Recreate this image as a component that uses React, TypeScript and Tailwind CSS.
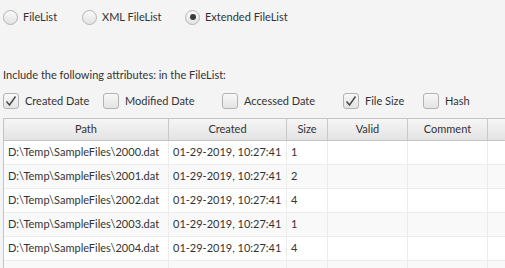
const rows = [
  { path: "D:\\Temp\\SampleFiles\\2000.dat", size: "1" },
  { path: "D:\\Temp\\SampleFiles\\2001.dat", size: "2" },
  { path: "D:\\Temp\\SampleFiles\\2002.dat", size: "4" },
  { path: "D:\\Temp\\SampleFiles\\2003.dat", size: "1" },
  { path: "D:\\Temp\\SampleFiles\\2004.dat", size: "4" },
  { path: "", size: "" },
];

const Radio = ({ label, checked, width }: { label: string; checked?: boolean; width: string }) => (
  <div className={`flex flex-none items-center gap-[5px] ${width}`}>
    <span className="flex h-[15px] w-[15px] items-center justify-center rounded-full border border-[#b3b3b3] bg-gradient-to-b from-[#fafafa] to-[#e2e2e2]">
      {checked && <span className="h-[6px] w-[6px] rounded-full bg-[#3a3a3a]" />}
    </span>
    <span>{label}</span>
  </div>
);

const CheckBox = ({ label, checked, width }: { label: string; checked?: boolean; width: string }) => (
  <div className={`flex flex-none items-center gap-[6px] ${width}`}>
    <span className="flex h-[16px] w-[16px] items-center justify-center rounded-[3px] border border-[#b3b3b3] bg-gradient-to-b from-[#f8f8f8] to-[#e4e4e4]">
      {checked && (
        <svg width="12" height="12" viewBox="0 0 12 12" fill="none">
          <path d="M1.5 6.5 L4.5 10 L10.5 1.5" stroke="#4a4a4a" strokeWidth="1.5" />
        </svg>
      )}
    </span>
    <span>{label}</span>
  </div>
);

const cols = "grid grid-cols-[165px_118px_41px_80px_80px_1fr]";

export default function App() {
  return (
    <div className="h-[268px] w-[505px] overflow-hidden whitespace-nowrap bg-[#f4f4f4] pl-[3px] text-[11px] text-[#333333] [font-family:Lato,sans-serif]">
      {/* Output format */}
      <div className="flex h-[33px] items-center pt-[1px]">
        <Radio label="FileList" width="w-[79px]" />
        <Radio label="XML FileList" width="w-[103px]" />
        <Radio label="Extended FileList" checked width="w-[120px]" />
      </div>

      <div className="mt-[34px] h-[16px] leading-[16px]">Include the following attributes: in the FileList:</div>

      <div className="mt-[10px] flex h-[16px] items-center">
        <CheckBox label="Created Date" checked width="w-[100px]" />
        <CheckBox label="Modified Date" width="w-[119px]" />
        <CheckBox label="Accessed Date" width="w-[121px]" />
        <CheckBox label="File Size" checked width="w-[80px]" />
        <CheckBox label="Hash" width="w-[60px]" />
      </div>

      {/* Table */}
      <div className="mt-[9px] w-[510px] border-l border-t border-[#c4c4c4] bg-white">
        <div className={`${cols} h-[22px] border-b border-[#c4c4c4] bg-gradient-to-b from-[#f6f6f6] to-[#e3e3e3]`}>
          {["Path", "Created", "Size", "Valid", "Comment", ""].map((h, i) => (
            <div key={i} className="flex items-center justify-center border-r border-[#c8c8c8]">
              {h}
            </div>
          ))}
        </div>
        {rows.map((r, i) => (
          <div
            key={i}
            className={`${cols} h-[24px] border-b border-[#ececec] ${i % 2 === 1 ? "bg-[#f9f9f9]" : "bg-white"}`}
          >
            <div className="flex items-center overflow-hidden border-r border-[#ececec] pl-[4px]">{r.path}</div>
            <div className="flex items-center overflow-hidden border-r border-[#ececec] pl-[4px]">
              {r.path ? "01-29-2019, 10:27:41" : ""}
            </div>
            <div className="flex items-center border-r border-[#ececec] pl-[4px]">{r.size}</div>
            <div className="border-r border-[#ececec]" />
            <div className="border-r border-[#ececec]" />
            <div />
          </div>
        ))}
      </div>
    </div>
  );
}
